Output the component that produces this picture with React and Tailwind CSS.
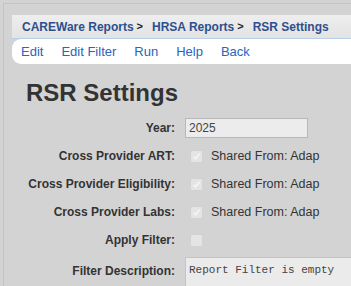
import React from "react";

function Check({ checked }) {
  return (
    <div className="ml-[5px] w-[13px] h-[13px] rounded-[2px] border border-[#d2d2d2] bg-[#e4e4e4] flex items-center justify-center shrink-0">
      {checked && (
        <svg width="9" height="9" viewBox="0 0 9 9">
          <path d="M1.5 4.8 L3.6 6.8 L7.6 1.8" fill="none" stroke="#f6f6f6" strokeWidth="1.5" />
        </svg>
      )}
    </div>
  );
}

function Row({ label, children }) {
  return (
    <div className="flex h-[28px] items-center">
      <div className="w-[163px] shrink-0 text-right font-bold text-[12px] text-[#333]">{label}</div>
      <div className="ml-[10px] flex items-center">{children}</div>
    </div>
  );
}

function Shared() {
  return <span className="ml-[8px] text-[12.5px] text-[#333] whitespace-nowrap">Shared From: Adap</span>;
}

export default function App() {
  const font = { fontFamily: '"Liberation Sans", Arial, sans-serif' };
  return (
    <div className="w-[351px] h-[286px] bg-[#d3d3d3] pt-[3px] pl-[3px] overflow-hidden" style={font}>
      <div className="h-[300px] border-l border-t border-[#c3c3c3] pl-[8px] pt-[11px]">
        <div className="h-[24px] bg-gradient-to-b from-[#eeeeee] to-[#e3e3e3] border-b border-[#b7cfe9] flex items-center pl-[10px] text-[12px] font-bold text-[#2d4f8e] whitespace-nowrap">
          <span>CAREWare Reports</span>
          <span className="text-[#222] text-[11px] ml-[3px] mr-[9px]">&gt;</span>
          <span>HRSA Reports</span>
          <span className="text-[#222] text-[11px] ml-[3px] mr-[9px]">&gt;</span>
          <span>RSR Settings</span>
        </div>
        <div className="h-[25px] bg-white rounded-l-[9px] flex items-center pl-[9px] gap-[18px] text-[13px] text-[#2a63c0] whitespace-nowrap">
          <span>Edit</span>
          <span>Edit Filter</span>
          <span>Run</span>
          <span>Help</span>
          <span>Back</span>
        </div>
        <div className="pt-[15px] pl-[14px] text-[24px] leading-[28px] font-bold text-[#333]">RSR Settings</div>
        <div className="mt-[7px]">
          <Row label="Year:">
            <div className="w-[123px] h-[20px] bg-[#ececec] border border-[#b8b8b8] pl-[3px] text-[12px] leading-[18px] text-[#444]">2025</div>
          </Row>
          <Row label="Cross Provider ART:">
            <Check checked />
            <Shared />
          </Row>
          <Row label="Cross Provider Eligibility:">
            <Check checked />
            <Shared />
          </Row>
          <Row label="Cross Provider Labs:">
            <Check checked />
            <Shared />
          </Row>
          <Row label="Apply Filter:">
            <Check />
          </Row>
          <div className="flex items-start">
            <div className="w-[163px] shrink-0 text-right font-bold text-[12px] text-[#333] mt-[8px]">Filter Description:</div>
            <div
              className="ml-[10px] mt-[3px] w-[200px] h-[60px] shrink-0 bg-[#ebebeb] border border-[#c4c4c4] pl-[3px] pt-[4px] text-[11px] text-[#444] whitespace-pre"
              style={{ fontFamily: '"Liberation Mono", monospace' }}
            >
              Report Filter is empty
            </div>
          </div>
        </div>
      </div>
    </div>
  );
}
